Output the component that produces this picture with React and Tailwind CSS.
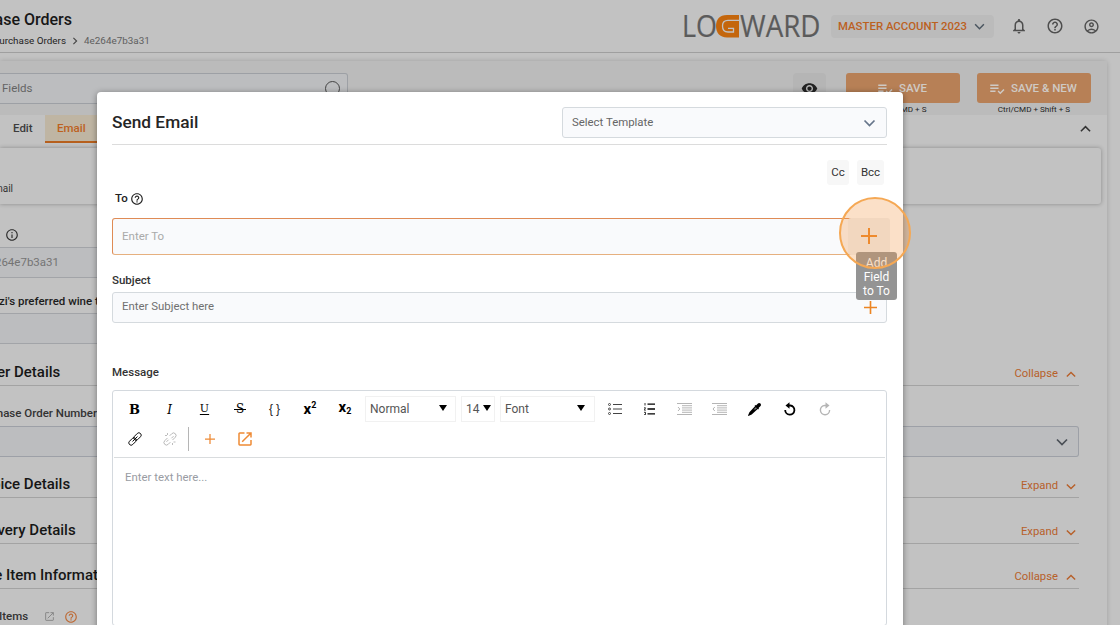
import {
  MdHelpOutline,
  MdOutlineAccountCircle,
  MdOutlineInfo,
  MdOutlineNotifications,
  MdPlaylistAddCheck,
  MdVisibility,
} from "react-icons/md";

function Chevron({ up, className }) {
  return (
    <svg viewBox="0 0 12 8" className={className} fill="none" stroke="currentColor" strokeWidth="1.7">
      <path d={up ? "M1 6.5 6 1.5 11 6.5" : "M1 1.5 6 6.5 11 1.5"} />
    </svg>
  );
}

function Plus({ size, className }) {
  return (
    <svg width={size} height={size} viewBox="0 0 16 16" className={className} stroke="currentColor" strokeWidth="2">
      <path d="M8 0v16M0 8h16" />
    </svg>
  );
}

function OpenIcon({ size, className }) {
  return (
    <svg width={size} height={size} viewBox="0 0 14 14" className={className} fill="none" stroke="currentColor" strokeWidth="1.5">
      <path d="M6.500 1H1.700a.7.7 0 0 0-.7.7v10.600c0 .4.3.7.7.7h10.600c.4 0 .7-.3.7-.7V8M8.500 1H13v4.500M13 1 4.200 9.800" />
    </svg>
  );
}

function Logo() {
  return (
    <svg width="138" height="26" viewBox="0 0 138 26" className="font-['Open_Sans']">
      <g fill="#5b5b5b" stroke="#5b5b5b" strokeWidth="0.2" fontSize="30.5">
        <text x="-1" y="24" textLength="35" lengthAdjust="spacingAndGlyphs">LO</text>
        <text x="57" y="24" textLength="80.500" lengthAdjust="spacingAndGlyphs">WARD</text>
      </g>
      <path fill="#c4660c" d="M56 2H44C36.500 2 33 6.500 33 13s3.500 11.500 11 11.500h12V2z" />
      <path
        d="M56.500 7.300H45c-4 0-5.500 2-5.500 5.700s1.500 6 5.500 6h5.500v-3.600H45"
        fill="none"
        stroke="#c2c2c2"
        strokeWidth="1.300"
      />
    </svg>
  );
}

function TopBar() {
  return (
    <header className="flex h-[53px] justify-between border-b border-[#9f9f9f]">
      <div className="pt-[9px]">
        <div className="flex h-[22px] w-[72px] items-center justify-end text-[16px] font-medium whitespace-nowrap text-[#171717]">
          Purchase Orders
        </div>
        <div className="flex h-5 items-center text-[9.900px]">
          <span className="flex w-[66px] justify-end whitespace-nowrap text-[#222]">Purchase Orders</span>
          <svg viewBox="0 0 6 10" className="mx-[6px] h-[8px] w-[6px]" fill="none" stroke="#444" strokeWidth="1.4">
            <path d="M1 1 5 5 1 9" />
          </svg>
          <span className="text-[#5e5e5e]">4e264e7b3a31</span>
        </div>
      </div>
      <div className="flex items-center pr-5">
        <Logo />
        <button className="ml-[10px] flex h-[23px] w-[163px] items-center rounded bg-[#bbb] pt-px pl-[7px] text-[11.4px] font-medium whitespace-nowrap text-[#bb611f]">
          <span className="w-[129px] text-left">MASTER ACCOUNT 2023</span>
          <Chevron className="ml-[7px] h-[7px] w-[11px] shrink-0 text-[#4a5560]" />
        </button>
        <MdOutlineNotifications className="ml-[16px] size-[18px] text-[#4e4e4e]" />
        <MdHelpOutline className="ml-[18px] size-[18px] text-[#4e4e4e]" />
        <MdOutlineAccountCircle className="ml-[19px] size-[17px] text-[#4e4e4e]" />
      </div>
    </header>
  );
}

function SaveButton({ label, hint }) {
  return (
    <div className="flex w-[114px] flex-col items-center">
      <button className="flex h-[31px] w-full items-center justify-center gap-[5px] rounded-[3px] bg-[#b78056] pt-px pr-[3px] text-[11.5px] font-medium text-[#cfcac5]">
        <MdPlaylistAddCheck className="size-[18px]" />
        {label}
      </button>
      <span className="text-[8.1px] leading-[12px] whitespace-nowrap text-[#222]">{hint}</span>
    </div>
  );
}

function SectionHeader({ title, open, height, offset }) {
  return (
    <div className={`mr-[28px] flex items-end justify-between border-b border-[#a3a3a3] ${height}`}>
      <h2 className={`mb-[4px] text-[15px] leading-[18px] font-medium whitespace-nowrap text-[#161616] ${offset}`}>{title}</h2>
      <button className="mb-[3px] flex items-center gap-[8px] pr-[3px] text-[11.3px] leading-4 text-[#b7602a]">
        {open ? "Collapse" : "Expand"}
        <Chevron up={open} className="h-[7px] w-[10px]" />
      </button>
    </div>
  );
}

function OrderPage() {
  return (
    <div className="h-[625px] overflow-hidden bg-[#c2c2c2]">
      <TopBar />
      <div className="mt-[8px] mr-[13px] h-[600px] rounded-tr bg-[#c2c2c2] shadow-[0_0_5px_rgba(0,0,0,0.18)]">
        <div className="flex h-[54px] bg-[#bbb] pt-[12px]">
          <div className="flex h-[31px] w-[348px] items-center justify-between rounded-r-[3px] border border-l-0 border-[#9da0a5] bg-[#bcbdbf] pr-[7px] pl-[2px] text-[11.5px] text-[#646464]">
            <span className="pt-px">Fields</span>
            <span className="size-[15px] rounded-full border border-[#444]" />
          </div>
          <div className="ml-[445px] flex h-[31px] w-[33px] items-center justify-center rounded bg-[#b5b5b5]">
            <MdVisibility className="size-[17px] text-[#222]" />
          </div>
          <div className="ml-[20px] flex gap-[17px]">
            <SaveButton label="SAVE" hint="Ctrl/CMD + S" />
            <SaveButton label="SAVE & NEW" hint="Ctrl/CMD + Shift + S" />
          </div>
        </div>
        <div className="flex h-[33px] items-start text-[11.5px] font-medium">
          <span className="flex h-[28px] w-[45px] items-center pl-[13px] text-[#3c3c3c]">Edit</span>
          <span className="flex h-[28px] w-[52px] items-center border-b-2 border-[#b65f1d] bg-[#bfb5a3] pt-[2px] pl-[12px] text-[#bd611e]">
            Email
          </span>
          <Chevron up className="mt-[10px] mr-[16px] ml-auto h-[8px] w-[11px] text-[#333]" />
        </div>
        <div className="mr-[6px] h-[56px] rounded-r-[3px] pt-[33px] shadow-[0_0_4px_rgba(0,0,0,0.3)]">
          <div className="flex w-[13px] justify-end text-[10px] leading-[15px] text-[#333]">Email</div>
        </div>
        <MdOutlineInfo className="mt-[24px] ml-[5px] size-[14px] text-[#2c2c2c]" />
        <div className="mt-[5px] flex h-[31px] w-[480px] items-center border-y border-[#a2a4a8] bg-[#bcbdbf] text-[11.5px] text-[#747474]">
          <span className="flex w-[59px] justify-end pt-px">4e264e7b3a31</span>
        </div>
        <div className="mt-[15px] h-[20px] text-[11.5px] leading-[17px] font-medium text-[#1c1c1c]">
          <span className="-ml-px">zi's preferred wine type</span>
        </div>
        <div className="h-[31px] w-[480px] border-y border-[#a2a4a8] bg-[#bcbdbf]" />
        <SectionHeader title="Order Details" open height="h-[42px]" offset="-ml-[27px]" />
        <div className="mt-[18px] flex h-[22px] w-[97px] justify-end text-[11.5px] leading-[18px] font-medium whitespace-nowrap text-[#333]">
          Purchase Order Number
        </div>
        <div className="mr-[28px] flex h-[31px] items-center justify-end rounded-r-[3px] border border-l-0 border-[#9da0a7] bg-[#bcbdbf] pr-[10px]">
          <Chevron className="h-[8px] w-[12px] text-[#4a4f56]" />
        </div>
        <SectionHeader title="Invoice Details" height="h-[41px]" offset="-ml-[28px]" />
        <SectionHeader title="Delivery Details" height="h-[46px]" offset="-ml-[28px]" />
        <SectionHeader title="Line Item Information" open height="h-[45px]" offset="-ml-[26px]" />
        <div className="mt-[19px] flex items-center text-[11.5px] leading-4 font-medium text-[#333]">
          <span className="-ml-[1px] w-[27px]">Items</span>
          <OpenIcon size={9} className="ml-[19px] text-[#858585]" />
          <MdHelpOutline className="mt-[2px] ml-[10px] size-[14px] text-[#bd6a35]" />
        </div>
      </div>
    </div>
  );
}

function Tool({ children, dim }) {
  return (
    <button className={`flex h-[26px] w-[35px] shrink-0 items-center justify-center ${dim ? "text-[#b5b5b5]" : "text-black"}`}>
      {children}
    </button>
  );
}

function ToolSelect({ label, className }) {
  return (
    <div className={`mr-[5px] flex h-[26px] shrink-0 items-center justify-between border border-[#f1f1f1] pl-[4px] text-[12px] text-[#555] ${className}`}>
      {label}
      <span className="-mt-[2px] border-x-[4.5px] border-t-[6px] border-x-transparent border-t-black" />
    </div>
  );
}

function LinkIcon({ broken }) {
  return (
    <svg width="14" height="14" viewBox="0 0 14 14" fill="none" stroke="currentColor" strokeWidth=".9">
      <g transform="rotate(-45 7 7)">
        {broken ? (
          <path d="M6 4.500H2a2.500 2.500 0 0 0 0 5h3M8 9.500h4a2.500 2.500 0 0 0 0-5H9M5.500 6.500H2.500M8.500 7.500h3" />
        ) : (
          <>
            <rect x="-.8" y="4.700" width="8.600" height="4.600" rx="2.300" />
            <rect x="6.200" y="4.700" width="8.600" height="4.600" rx="2.300" />
            <path d="M3.500 7h7" />
          </>
        )}
      </g>
      {broken && <path d="M4.500 1v2M2 3.500h2M9.500 11v2M10.500 10h2" />}
    </svg>
  );
}

function IndentIcon({ out }) {
  return (
    <svg width="15" height="12" viewBox="0 0 15 12" fill="none" stroke="currentColor" strokeWidth="1">
      <path d="M0 .5h15M5 2.700h10M5 4.900h10M5 7.100h10M5 9.300h10M0 11.500h15" />
      <path d={out ? "M2.800 4 1 6l1.800 2" : "M1 4l1.800 2L1 8"} />
    </svg>
  );
}

function Toolbar() {
  return (
    <div className="mx-[1px] h-[67px] border-b border-[#d9dcde] pt-[5px] pl-[3px]">
      <div className="flex items-center">
        <Tool><span className="pt-px font-['DejaVu_Serif'] text-[13px] font-bold">B</span></Tool>
        <Tool><span className="pt-px font-['DejaVu_Serif'] text-[12px] italic">I</span></Tool>
        <Tool><span className="font-['DejaVu_Serif'] text-[11px] underline underline-offset-2">U</span></Tool>
        <Tool>
          <span className="relative ml-px font-['DejaVu_Serif'] text-[12px]">
            S
            <span className="absolute top-[9px] -left-[2px] h-px w-[12px] bg-black" />
          </span>
        </Tool>
        <Tool>
          <span className="mb-px flex gap-[3px] font-['Liberation_Sans'] text-[12px] text-[#222]">
            <span>{"{"}</span>
            <span>{"}"}</span>
          </span>
        </Tool>
        <Tool>
          <span className="ml-px flex items-center text-[15px] font-bold">x<span className="mb-[6px] text-[9px]">2</span></span>
        </Tool>
        <Tool>
          <span className="mb-[3px] ml-px flex items-center text-[15px] font-bold">x<span className="mt-[8px] text-[9px]">2</span></span>
        </Tool>
        <ToolSelect label="Normal" className="ml-[3px] w-[91px] pr-[8px]" />
        <ToolSelect label="14" className="w-[34px] pr-[3px]" />
        <ToolSelect label="Font" className="w-[95px] pr-[9px]" />
        <span className="-ml-[3px] flex">
          <Tool>
            <svg width="14" height="12" viewBox="0 0 14 12" fill="none" stroke="#444" strokeWidth="1">
              <path d="M5 1.500h9M5 6h9M5 10.500h9" />
              <circle cx="1.500" cy="1.500" r="1" />
              <circle cx="1.500" cy="6" r="1" />
              <circle cx="1.500" cy="10.500" r="1" />
            </svg>
          </Tool>
          <Tool>
            <svg width="11" height="12" viewBox="0 0 11 12" fill="none" stroke="currentColor" strokeWidth="1.300">
              <path d="M3.500 1.200H11M3.500 6H11M3.500 10.800H11" />
              <path d="M1 0v2.500M0 4.800h1.500L.3 7.200h1.500M0 9.300h1.500v2.400H0" strokeWidth=".8" />
            </svg>
          </Tool>
          <Tool dim><IndentIcon /></Tool>
          <Tool dim><IndentIcon out /></Tool>
          <Tool>
            <svg width="13" height="13" viewBox="0 0 13 13" fill="currentColor">
              <path d="M12.400.6c.8.8.7 2-.1 2.700L10.600 5l.4.6-.8.8-.5-.4-6 5.500L.4 13 0 12.600l1.400-3.300L7 3.300l-.4-.5.8-.8.600.4L9.700.7c.8-.8 2-.8 2.700-.1z" />
              <path d="M7.800 4.200 5.500 6.600h1.800L9 5.300z" fill="#777" />
            </svg>
          </Tool>
          <Tool>
            <svg width="12" height="14" viewBox="0 0 12 14" fill="none" stroke="currentColor" strokeWidth="1.800">
              <path d="M4 3.500h2.300A4.600 4.600 0 1 1 1.200 8" />
              <path d="M5.500.2v6.600L1.500 3.500z" fill="currentColor" stroke="none" />
            </svg>
          </Tool>
          <Tool dim>
            <svg width="12" height="14" viewBox="0 0 12 14" fill="none" stroke="currentColor" strokeWidth="1.400">
              <path d="M8 3.500H5.700A4.600 4.600 0 1 0 10.600 8" />
              <path d="M6.500.2v6.600l4-3.300z" fill="currentColor" stroke="none" />
            </svg>
          </Tool>
        </span>
      </div>
      <div className="mt-[4px] flex items-center">
        <Tool><LinkIcon /></Tool>
        <Tool dim><LinkIcon broken /></Tool>
        <span className="ml-px h-[24px] w-px bg-[#b5b5b5]" />
        <span className="ml-[3px] flex text-[#ee8a35]">
          <span className="flex w-[35px] items-center justify-center"><Plus size={10} /></span>
          <span className="flex w-[35px] items-center justify-center"><OpenIcon size={14} /></span>
        </span>
      </div>
    </div>
  );
}

function SendEmailModal() {
  return (
    <div className="absolute top-[92px] left-[97px] h-[560px] w-[806px] rounded-[4px] bg-white pt-[15px] pr-[16px] pl-[15px] shadow-[0_1px_6px_rgba(0,0,0,0.4)]">
      <div className="flex h-[38px] justify-between border-b border-[#dcdcdc]">
        <h1 className="pt-[2px] text-[17.3px] leading-[26px] font-medium text-[#252525]">Send Email</h1>
        <div className="flex h-[31px] w-[325px] items-center justify-between rounded-[3px] border border-[#d5dade] bg-[#f9fafc] pt-px pr-[10px] pl-[9px] text-[11.4px] text-[#666]">
          Select Template
          <Chevron className="h-[8px] w-[13px] text-[#66758a]" />
        </div>
      </div>
      <div className="mt-[15px] flex justify-end gap-[8px] pr-[3px] text-[#333]">
        <button className="h-[25px] w-[22px] rounded-[3px] bg-[#f7f7f7] text-[11.5px]">Cc</button>
        <button className="h-[25px] w-[27px] rounded-[3px] bg-[#f7f7f7] text-[11.5px]">Bcc</button>
      </div>
      <div className="flex h-[33px] items-center gap-[2px] pb-[6px] pl-[3px] text-[11.5px] font-medium text-[#222]">
        To
        <MdHelpOutline className="size-[14px]" />
      </div>
      <div className="flex h-[37px] items-center justify-between rounded-[3px] border border-[#df8b55] border-b-[#e6b07f] bg-[#f9fafc] pl-[9px] text-[11.5px] text-[#aaa]">
        <span>Enter To</span>
        <span className="-mr-[4px] flex h-[37px] w-[42px] items-center justify-center rounded-[3px] bg-[#f2f2f2] pb-px text-[#ec8522]">
          <Plus size={16} />
        </span>
      </div>
      <div className="mt-[17px] h-[20px] text-[11.5px] leading-[16px] font-medium text-[#333]">Subject</div>
      <div className="flex h-[31px] items-center justify-between rounded-[3px] border border-[#d5dade] bg-[#f9fafc] pr-[9px] pb-px pl-[9px] text-[11.4px] text-[#707070]">
        Enter Subject here
        <Plus size={13} className="text-[#ec8522]" />
      </div>
      <div className="mt-[41px] h-[26px] text-[11.5px] leading-[17px] font-medium text-[#333]">Message</div>
      <div className="h-[236px] rounded-[3px] border border-[#d4d9de]">
        <Toolbar />
        <p className="mt-[11px] pl-[12px] text-[11.4px] leading-4 text-[#999ca3]">Enter text here...</p>
      </div>
      <div className="absolute top-[160px] left-[759px] h-[48px] w-[41px] rounded-[3px] bg-[#949494] px-[5px] pt-[4px] text-center text-[12px] leading-[14px] text-white">
        Add Field to To
      </div>
      <div className="absolute top-[105px] left-[742px] size-[72px] rounded-full border-[2.5px] border-[#f5a854] bg-[#f2994a]/30" />
    </div>
  );
}

export default function App() {
  return (
    <div className="relative h-[625px] w-[1120px] overflow-hidden font-['Roboto',sans-serif]">
      <OrderPage />
      <SendEmailModal />
    </div>
  );
}
